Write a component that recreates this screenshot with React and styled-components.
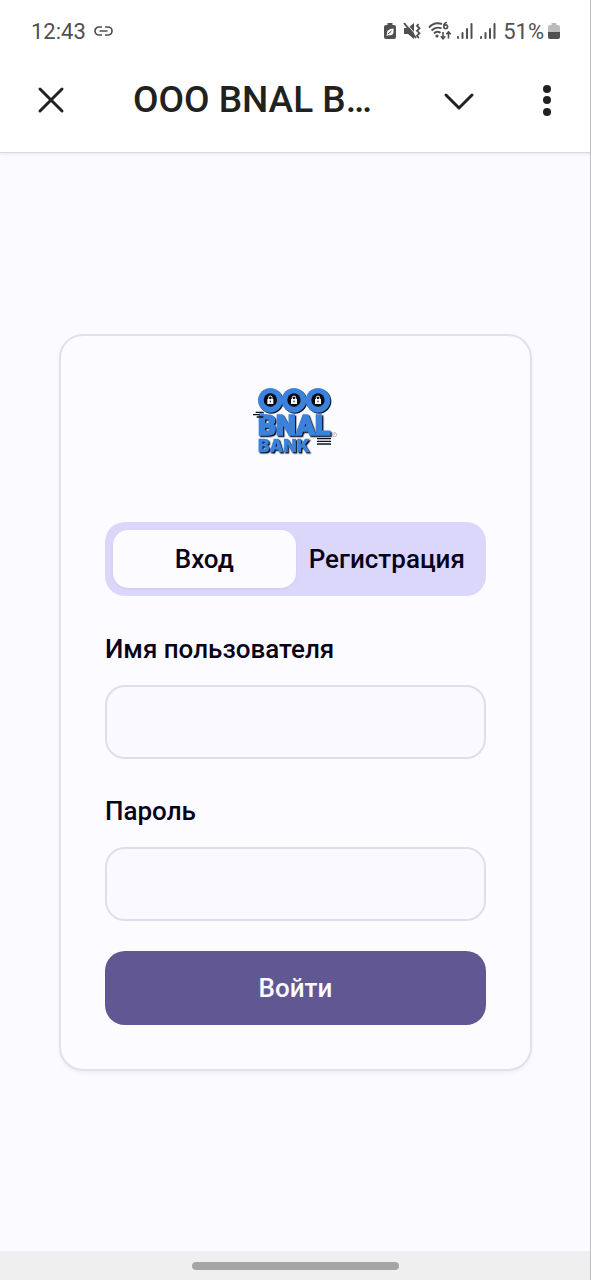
import React, { useState } from "react";
import styled, { createGlobalStyle } from "styled-components";

const GlobalStyle = createGlobalStyle`
  *, *::before, *::after { box-sizing: border-box; }
  body { margin: 0; background: #fbfaff; }
  button, input { font: inherit; color: inherit; }
`;

const Screen = styled.div`
  position: relative;
  min-height: 100vh;
  display: flex;
  flex-direction: column;
  background: #fbfaff;
  color: #070319;
  font-family: Roboto, "Noto Sans", sans-serif;
  font-size: 26px;
  font-weight: 500;

  &::after {
    content: "";
    position: absolute;
    top: 0;
    right: 0;
    bottom: 0;
    width: 1px;
    background: #bdbdc1;
  }
`;

const Header = styled.header`
  background: #fff;
  padding-bottom: 14px;
  border-bottom: 1px solid #d9d9dc;
  box-shadow: 0 1px 3px rgba(0, 0, 0, 0.08);
`;

const StatusBar = styled.div`
  display: flex;
  align-items: center;
  justify-content: space-between;
  height: 62px;
  padding: 0 31px;
  color: #505050;
  font-size: 22px;
  font-weight: 400;
`;

const StatusGroup = styled.div`
  display: flex;
  align-items: center;
  gap: ${(p) => p.$gap}px;

  svg { display: block; }
`;

const AppBar = styled.div`
  display: flex;
  align-items: center;
  height: 76px;
  padding: 0 20px 0 27px;
  color: #212121;
`;

const IconButton = styled.button`
  display: grid;
  place-items: center;
  flex: none;
  width: 48px;
  height: 48px;
  padding: 0;
  border: 0;
  background: none;
  cursor: pointer;
`;

const Actions = styled.div`
  display: flex;
  gap: 40px;
`;

const Title = styled.h1`
  flex: 1;
  min-width: 0;
  margin: 0 0 0 58px;
  overflow: hidden;
  white-space: nowrap;
  font-size: 37px;
  line-height: 48px;
  font-weight: 500;
`;

const Main = styled.main`
  flex: 1;
  display: flex;
  flex-direction: column;
  justify-content: center;
  padding: 24px 59px;
`;

const Card = styled.section`
  padding: 44px;
  border: 2px solid #e2e1ea;
  border-radius: 24px;
  background: #fcfbff;
  box-shadow: 0 2px 4px rgba(0, 0, 0, 0.05);
`;

const Logo = styled.svg`
  display: block;
  width: 91px;
  height: 80px;
  margin: 0 auto 62px;
`;

const LogoText = styled.text`
  font-family: ${(p) => p.$family}, sans-serif;
  font-size: ${(p) => p.$size}px;
  font-weight: 900;
  fill: #3b82dc;
  stroke: #3b82dc;
  stroke-width: ${(p) => p.$stroke}px;
  filter: drop-shadow(4px 4px 0 #0b1020);
`;

const Tabs = styled.div`
  display: grid;
  grid-template-columns: 1fr 1fr;
  height: 74px;
  margin-bottom: 31px;
  padding: 8px;
  border-radius: 20px;
  background: #dbd7fa;
`;

const Tab = styled.button`
  min-width: 0;
  padding: 0;
  border: 0;
  border-radius: 15px;
  background: ${(p) => (p.$active ? "#fcfbff" : "transparent")};
  box-shadow: ${(p) => (p.$active ? "0 1px 3px rgba(0, 0, 0, 0.06)" : "none")};
  cursor: pointer;
`;

const Form = styled.form`
  display: flex;
  flex-direction: column;
  gap: 30px;
`;

const Field = styled.div`
  display: flex;
  flex-direction: column;
  gap: 14px;
`;

const Label = styled.label`
  line-height: 44px;
`;

const Input = styled.input`
  width: 100%;
  height: 74px;
  padding: 0 22px;
  border: 2px solid #e0deeb;
  border-radius: 20px;
  background: #faf9ff;
  outline: none;
`;

const Submit = styled.button`
  height: 74px;
  border: 0;
  border-radius: 20px;
  background: #615793;
  color: #fbfaff;
  cursor: pointer;
`;

const NavBar = styled.footer`
  display: flex;
  justify-content: center;
  align-items: center;
  height: 29px;
  background: #efefef;
`;

const NavHandle = styled.div`
  width: 35%;
  height: 8px;
  border-radius: 4px;
  background: #a5a5a5;
`;

const LinkIcon = () => (
  <svg width="19" height="12" viewBox="0 0 19 12" fill="none" stroke="currentColor" strokeWidth="1.700">
    <path d="M8 2H5a4 4 0 0 0 0 8h3M11 2h3a4 4 0 0 1 0 8h-3M5.500 6h8" />
  </svg>
);

const BatterySaverIcon = () => (
  <svg width="12" height="18" viewBox="0 0 12 18">
    <path fill="currentColor" d="M3.500 1h5v2H10a2 2 0 0 1 2 2v10a2 2 0 0 1-2 2H2a2 2 0 0 1-2-2V5a2 2 0 0 1 2-2h1.500z" />
    <path fill="#fff" d="M9.500 6.500v3.500c0 2.500-2.500 4-5 3L3 14l-.6-.8 1-1.100C2 9.500 4 7.300 9.500 6.500z" />
    <path stroke="currentColor" strokeWidth="1" d="M4 12l3.500-3" />
  </svg>
);

const MuteIcon = () => (
  <svg width="18" height="18" viewBox="0 0 18 18">
    <path fill="currentColor" d="M1 6h4l6-5v16l-6-5H1z" />
    <path stroke="#fff" strokeWidth="1" d="M3 1l11 13" />
    <path stroke="currentColor" strokeWidth="2" d="M1 1l12 15" />
    <path fill="none" stroke="currentColor" strokeWidth="1.800" d="M15.500 2l-1.500 2 2.500 2.300-2.500 2.500 2.500 2.400-2.500 2.500 1.800 2.300" />
  </svg>
);

const WifiIcon = () => (
  <svg width="24" height="20" viewBox="0 0 24 20" fill="none" stroke="currentColor" strokeWidth="1.900">
    <path d="M1 6.500C4.500 2.500 9 1.500 14 3M3.500 9.500C6.500 6.500 10 6 13.500 7.300M6 12.500c2-2 4.500-2 6.500-.6" />
    <circle cx="9" cy="15" r="1.600" fill="currentColor" stroke="none" />
    <path strokeWidth="1.600" d="M18.800 1.300c-2 .5-3 2-3 4" />
    <circle strokeWidth="1.600" cx="17.700" cy="5.800" r="1.900" />
    <path strokeWidth="1.600" d="M15 11v6.500M12.800 15.300l2.200 2.400 2.200-2.400M20.500 17.500V11M18.300 13.300l2.200-2.400 2.200 2.400" />
  </svg>
);

const SignalIcon = () => (
  <svg width="16" height="18" viewBox="0 0 16 18" fill="currentColor">
    <rect x="0" y="14" width="2" height="3" rx="1" />
    <rect x="4.500" y="10" width="2" height="7" rx="1" />
    <rect x="9" y="6" width="2" height="11" rx="1" />
    <rect x="13.500" y="1" width="2" height="16" rx="1" />
  </svg>
);

const BatteryIcon = () => (
  <svg width="12" height="18" viewBox="0 0 12 18">
    <path fill="#bcbcbc" d="M3.500 1h5v2H10a2 2 0 0 1 2 2v5H0V5a2 2 0 0 1 2-2h1.500z" />
    <path fill="currentColor" d="M0 10h12v5a2 2 0 0 1-2 2H2a2 2 0 0 1-2-2z" />
  </svg>
);

const Coin = ({ x }) => (
  <g>
    <circle cx={x + 3} cy="79" r="37" fill="#0b1020" />
    <circle cx={x} cy="76" r="37" fill="#3b82dc" />
    <circle cx={x} cy="75" r="20" fill="#050a14" />
    <path d={`M${x - 5} 73v-5a5 5 0 0 1 10 0v5`} fill="none" stroke="#fff" strokeWidth="3" />
    <rect x={x - 9} y="72" width="18" height="15" rx="1" fill="#fff" />
    <path d={`M${x} 77v5`} stroke="#050a14" strokeWidth="3" />
  </g>
);

const BankLogo = () => (
  <Logo viewBox="30 15 273 240" role="img" aria-label="OOO BNAL BANK">
    <Coin x={91} />
    <Coin x={162} />
    <Coin x={234} />
    <LogoText x="54" y="179" $family="Roboto" $size={84} $stroke={5}>BNAL</LogoText>
    <LogoText x="54" y="231" $family="Inter" $size={52} $stroke={1}>BANK</LogoText>
    <path d="M47 112h24M39 119h31M50 126h20" stroke="#0b1020" strokeWidth="4" />
    <path d="M58 115h14v7H60z" fill="#3b82dc" />
    <path d="M231 191h42M231 199h42M231 207h42" stroke="#0b1020" strokeWidth="4" />
    <circle cx="284" cy="179" r="6" fill="none" stroke="#9a9aa4" strokeWidth="2" />
    <path d="M282 182v-6h4M282 179h3" fill="none" stroke="#9a9aa4" strokeWidth="1" />
  </Logo>
);

export default function App() {
  const [tab, setTab] = useState("login");

  return (
    <>
      <GlobalStyle />
      <Screen>
        <Header>
          <StatusBar>
            <StatusGroup $gap={8}>
              <span>12:43</span>
              <LinkIcon />
            </StatusGroup>
            <StatusGroup $gap={4}>
              <StatusGroup $gap={7}>
                <BatterySaverIcon />
                <MuteIcon />
                <StatusGroup $gap={5}>
                  <WifiIcon />
                  <SignalIcon />
                </StatusGroup>
                <SignalIcon />
                <span>51%</span>
              </StatusGroup>
              <BatteryIcon />
            </StatusGroup>
          </StatusBar>
          <AppBar>
            <IconButton aria-label="Закрыть">
              <svg width="28" height="28" viewBox="0 0 28 28" fill="none" stroke="currentColor" strokeWidth="3" strokeLinecap="round">
                <path d="M3 3l22 22M25 3L3 25" />
              </svg>
            </IconButton>
            <Title>OOO BNAL B…</Title>
            <Actions>
              <IconButton aria-label="Свернуть">
                <svg width="32" height="32" viewBox="0 0 32 32" fill="none" stroke="currentColor" strokeWidth="3" strokeLinecap="round" strokeLinejoin="round">
                  <path d="M3 11l13 13 13-13" />
                </svg>
              </IconButton>
              <IconButton aria-label="Меню">
                <svg width="10" height="36" viewBox="0 0 10 36" fill="currentColor">
                  <circle cx="5" cy="7" r="4" />
                  <circle cx="5" cy="18" r="4" />
                  <circle cx="5" cy="30" r="4" />
                </svg>
              </IconButton>
            </Actions>
          </AppBar>
        </Header>

        <Main>
          <Card>
            <BankLogo />
            <Tabs role="tablist">
              <Tab type="button" role="tab" aria-selected={tab === "login"} $active={tab === "login"} onClick={() => setTab("login")}>
                Вход
              </Tab>
              <Tab type="button" role="tab" aria-selected={tab === "register"} $active={tab === "register"} onClick={() => setTab("register")}>
                Регистрация
              </Tab>
            </Tabs>
            <Form onSubmit={(e) => e.preventDefault()}>
              <Field>
                <Label htmlFor="username">Имя пользователя</Label>
                <Input id="username" type="text" autoComplete="username" />
              </Field>
              <Field>
                <Label htmlFor="password">Пароль</Label>
                <Input id="password" type="password" autoComplete="current-password" />
              </Field>
              <Submit type="submit">Войти</Submit>
            </Form>
          </Card>
        </Main>

        <NavBar>
          <NavHandle />
        </NavBar>
      </Screen>
    </>
  );
}
